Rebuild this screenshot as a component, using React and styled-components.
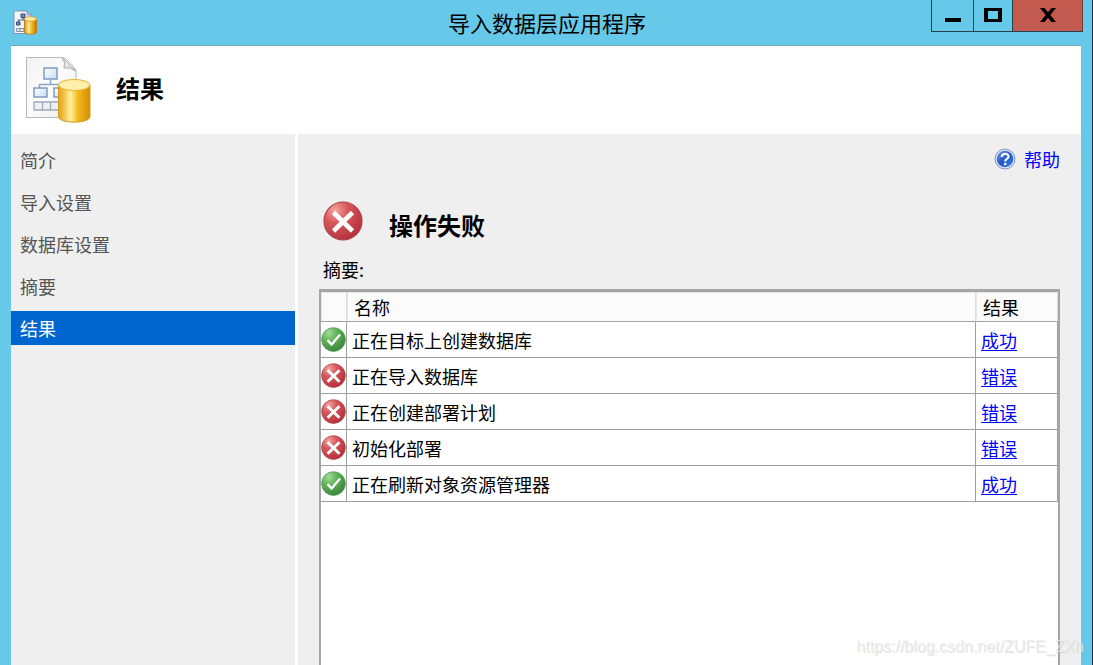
import React, { useState } from "react";
import styled, { createGlobalStyle } from "styled-components";

const GlobalStyle = createGlobalStyle`
* {
  box-sizing: border-box;
}
body {
  margin: 0;
  background: #66c9e9;
  color: #000;
  font-family: "Noto Sans CJK SC", sans-serif;
  font-size: 18px;
  line-height: 24px;
}
`
const StyledWindow = styled.div`
position: relative;
display: flex;
flex-direction: column;
min-height: 100vh;
padding: 0 11px;
background: #66c9e9;
border-right: 1px solid #2b2f3a;
overflow: hidden;
`
const StyledTitleBar = styled.div`
display: grid;
grid-template-columns: 1fr auto 1fr;
align-items: start;
height: 46px;
margin-right: -2px;
`
const StyledAppIcon = styled.div`
padding: 10px 0 0 2px;
line-height: 0;
`
const StyledTitle = styled.h1`
margin: 0;
padding-top: 7px;
font-size: 22px;
font-weight: 400;
line-height: 30px;
`
const StyledControls = styled.div`
display: flex;
justify-content: flex-end;
`
const StyledControl = styled.button`
display: flex;
align-items: center;
justify-content: center;
width: ${(props) => props.$width}px;
height: 32px;
padding: 0 0 2px;
border: 1px solid #27404a;
border-top: none;
border-right: ${(props) => (props.$close ? "1px solid #6d3a3a" : "none")};
background: ${(props) => (props.$close ? "#c25a50" : "#66c9e9")};
`
const StyledHeader = styled.div`
display: flex;
align-items: center;
gap: 24px;
height: 88px;
padding-left: 13px;
background: #fff;
box-shadow: 0 -1px #6fa9c0;
`
const StyledHeading = styled.h2`
margin: 0;
padding-bottom: 4px;
font-size: 24px;
font-weight: 700;
line-height: 32px;
`
const StyledBody = styled.div`
display: flex;
flex: 1;
gap: 3px;
background: #fff;
`
const StyledNav = styled.nav`
display: flex;
flex-direction: column;
gap: 8px;
width: 284px;
padding-top: 9px;
background: #efefef;
`
const StyledNavItem = styled.button`
height: 34px;
padding: 0 9px;
border: none;
background: ${(props) => (props.$active ? "#0066cf" : "transparent")};
color: ${(props) => (props.$active ? "#fff" : "#555")};
font: inherit;
text-align: left;
`
const StyledMain = styled.main`
display: flex;
flex-direction: column;
flex: 1;
padding: 13px 21px 0;
background: #efefef;
`
const StyledHelp = styled.a`
display: flex;
align-items: center;
align-self: flex-end;
gap: 8px;
color: #0000ff;
text-decoration: none;
`
const StyledStatus = styled.div`
display: flex;
align-items: center;
gap: 26px;
padding: 30px 0 16px 4px;
`
const StyledStatusText = styled.h2`
margin: 0;
padding-top: 8px;
font-size: 24px;
font-weight: 700;
line-height: 32px;
`
const StyledLabel = styled.div`
padding: 0 0 8px 4px;
`
const StyledGrid = styled.div`
flex: 1;
border: 2px solid #a6a6aa;
border-top-width: 3px;
border-bottom: none;
background: #fff;
`
const StyledTable = styled.table`
width: 100%;
border-collapse: separate;
border-spacing: 0;
table-layout: fixed;
`
const StyledTh = styled.th`
width: ${(props) => props.$width || "auto"};
height: 30px;
padding: 0 7px;
border-right: 1px solid #dcdcdc;
border-bottom: 1px solid #a0a0a0;
background: #fbfbfb;
box-shadow: inset 1px 1px #e6e6e6;
font-weight: 400;
text-align: left;
`
const StyledTd = styled.td`
height: 36px;
padding: ${(props) => (props.$icon ? "0" : "0 6px 0 5px")};
border-right: 1px solid #a0a0a0;
border-bottom: 1px solid #a0a0a0;
line-height: ${(props) => (props.$icon ? "0" : "24px")};
`
const StyledLink = styled.a`
color: #0000ff;
text-decoration: underline;
text-underline-offset: 2px;
`
const StyledWatermark = styled.div`
position: absolute;
right: 8px;
bottom: 8px;
color: rgba(235, 235, 235, 0.75);
font-family: "Liberation Sans", sans-serif;
font-size: 16px;
line-height: 20px;
text-shadow: 1px 1px rgba(150, 150, 150, 0.25);
pointer-events: none;
`

const steps = ["简介", "导入设置", "数据库设置", "摘要", "结果"];

const results = [
  { name: "正在目标上创建数据库", ok: true },
  { name: "正在导入数据库", ok: false },
  { name: "正在创建部署计划", ok: false },
  { name: "初始化部署", ok: false },
  { name: "正在刷新对象资源管理器", ok: true },
];

function AppIcon() {
  return (
    <svg width="25" height="25" viewBox="0 0 25 25" aria-hidden="true">
      <defs>
        <linearGradient id="app-gold" x1="0" x2="1">
          <stop offset="0" stopColor="#d79a1c" />
          <stop offset="0.35" stopColor="#ffe88c" />
          <stop offset="0.65" stopColor="#f0b020" />
          <stop offset="1" stopColor="#b87400" />
        </linearGradient>
      </defs>
      <path d="M1 1H14L18 5V23.500H1Z" fill="#f2f5fa" stroke="#8794ab" />
      <path d="M14 1V5H18Z" fill="#cdd5e2" stroke="#8794ab" />
      <path d="M10 7V10M5.500 13V10H11" fill="none" stroke="#4b628e" strokeWidth="1.200" />
      <path d="M8 4H12V7.500H8ZM3.500 12H7V15H3.500Z" fill="#6f8fc4" stroke="#34487a" />
      <path d="M3.500 18.500H11V21.500H3.500ZM7 18.500V21.500" fill="#e3e9f3" stroke="#8392ac" />
      <path d="M11.500 9V22C11.500 25 23.500 25 23.500 22V9Z" fill="url(#app-gold)" stroke="#bd801a" />
      <ellipse cx="17.500" cy="9" rx="6" ry="2.300" fill="#fff0a8" stroke="#d8a132" />
    </svg>
  )
}

function DatabaseIcon() {
  return (
    <svg width="68" height="68" viewBox="0 0 68 68" aria-hidden="true">
      <defs>
        <linearGradient id="db-gold" x1="0" x2="1">
          <stop offset="0" stopColor="#e2a21c" />
          <stop offset="0.15" stopColor="#f0bd3c" />
          <stop offset="0.38" stopColor="#fff0a0" />
          <stop offset="0.62" stopColor="#f3b71f" />
          <stop offset="1" stopColor="#d48c00" />
        </linearGradient>
        <linearGradient id="db-page" x1="0" y1="0" x2="1" y2="1">
          <stop offset="0" stopColor="#f1f1f1" />
          <stop offset="0.5" stopColor="#fdfdfd" />
          <stop offset="1" stopColor="#e6e6e6" />
        </linearGradient>
        <linearGradient id="db-box" x1="0" y1="0" x2="1" y2="1">
          <stop offset="0" stopColor="#fff" />
          <stop offset="1" stopColor="#c9dcf3" />
        </linearGradient>
      </defs>
      <path d="M2.500 1.500H38Q43 2 52 14V61.500H2.500Z" fill="url(#db-page)" stroke="#b9b9b9" />
      <path d="M38 1.500Q42 6 40 12Q46 10.500 52 15Z" fill="#e6e6e6" stroke="#aaa" />
      <path d="M26.500 24V28M15.500 32V28.500H38V32" fill="none" stroke="#8ba6c4" strokeWidth="1.500" />
      <g fill="url(#db-box)" stroke="#7795bb" strokeWidth="1.400">
        <rect x="20" y="12" width="13" height="11" />
        <rect x="10" y="32" width="13" height="9" />
        <rect x="30" y="32" width="13" height="9" />
      </g>
      <path d="M10 46H40V54H10ZM18.500 46V54M26.500 46V54" fill="#f0f0f0" stroke="#9aa8ba" strokeWidth="1.300" />
      <path d="M34.500 29V60.500C34.500 68 66 68 66 60.500V29Z" fill="url(#db-gold)" stroke="#d39a20" />
      <ellipse cx="50.200" cy="29" rx="15.700" ry="5.500" fill="#fff0ae" stroke="#e8b32e" />
    </svg>
  )
}

function StatusIcon({ ok, size, id }) {
  return (
    <svg width={size} height={size} viewBox="0 0 40 40" role="img" aria-label={ok ? "成功" : "错误"}>
      <defs>
        <radialGradient id={id} cx="0.3" cy="0.22" r="0.85">
          <stop offset="0" stopColor={ok ? "#a3dc98" : "#f4a59c"} />
          <stop offset="0.4" stopColor={ok ? "#62b35b" : "#d8555a"} />
          <stop offset="1" stopColor={ok ? "#37853a" : "#b3303b"} />
        </radialGradient>
      </defs>
      <circle cx="20" cy="20" r="19" fill={`url(#${id})`} stroke={ok ? "#4f9a50" : "#ad434b"} strokeWidth="1.200" />
      {ok ? (
        <path d="M10.500 21L17 28L30.500 12" fill="none" stroke="#fff" strokeWidth="3.800" />
      ) : (
        <path d="M10.500 11.500L29.500 30M29.500 11.500L10.500 30" fill="none" stroke="#fff" strokeWidth="4.600" />
      )}
    </svg>
  )
}

function HelpIcon() {
  return (
    <svg width="22" height="22" viewBox="0 0 22 22" aria-hidden="true">
      <defs>
        <linearGradient id="help-blue" x1="0" y1="0" x2="1" y2="1">
          <stop offset="0" stopColor="#6f9fe8" />
          <stop offset="0.5" stopColor="#2258c8" />
          <stop offset="1" stopColor="#3d85ec" />
        </linearGradient>
      </defs>
      <circle cx="11" cy="11" r="10" fill="#dce7f6" stroke="#7f98c0" />
      <circle cx="11" cy="11" r="8.300" fill="url(#help-blue)" />
      <path d="M7.800 9C7.800 4.800 14.500 4.800 14.500 8.600C14.500 11 11.200 10.800 11.200 13.400" fill="none" stroke="#fff" strokeWidth="2.200" />
      <circle cx="11.200" cy="16" r="1.300" fill="#fff" />
    </svg>
  )
}

function TitleBar() {
  return (
    <StyledTitleBar>
      <StyledAppIcon>
        <AppIcon />
      </StyledAppIcon>
      <StyledTitle>导入数据层应用程序</StyledTitle>
      <StyledControls>
        <StyledControl $width={42} aria-label="最小化">
          <svg width="16" height="14" viewBox="0 0 16 14">
            <path d="M0 10H16V14H0Z" />
          </svg>
        </StyledControl>
        <StyledControl $width={39} aria-label="最大化">
          <svg width="18" height="14" viewBox="0 0 18 14">
            <path d="M0 0H18V14H0ZM4 3V11H14V3Z" fillRule="evenodd" />
          </svg>
        </StyledControl>
        <StyledControl $width={71} $close aria-label="关闭">
          <svg width="16" height="14" viewBox="0 0 16 14">
            <path d="M0 0H4.500L8 4.300L11.500 0H16L10.300 7L16 14H11.500L8 9.700L4.500 14H0L5.700 7Z" />
          </svg>
        </StyledControl>
      </StyledControls>
    </StyledTitleBar>
  )
}

function ResultTable() {
  return (
    <StyledTable>
      <thead>
        <tr>
          <StyledTh $width="26px" aria-label="状态"></StyledTh>
          <StyledTh>名称</StyledTh>
          <StyledTh $width="82px">结果</StyledTh>
        </tr>
      </thead>
      <tbody>
        {results.map((row, i) => (
          <tr key={i}>
            <StyledTd $icon>
              <StatusIcon ok={row.ok} size={25} id={`row-${i}`} />
            </StyledTd>
            <StyledTd>{row.name}</StyledTd>
            <StyledTd>
              <StyledLink href="#">{row.ok ? "成功" : "错误"}</StyledLink>
            </StyledTd>
          </tr>
        ))}
      </tbody>
    </StyledTable>
  )
}

function App() {
  const [step, setStep] = useState(4);

  return (
    <StyledWindow>
      <GlobalStyle />
      <TitleBar />
      <StyledHeader>
        <DatabaseIcon />
        <StyledHeading>结果</StyledHeading>
      </StyledHeader>
      <StyledBody>
        <StyledNav>
          {steps.map((name, i) => (
            <StyledNavItem key={name} $active={i === step} onClick={() => setStep(i)}>
              {name}
            </StyledNavItem>
          ))}
        </StyledNav>
        <StyledMain>
          <StyledHelp href="#">
            <HelpIcon />
            帮助
          </StyledHelp>
          <StyledStatus>
            <StatusIcon ok={false} size={40} id="status" />
            <StyledStatusText>操作失败</StyledStatusText>
          </StyledStatus>
          <StyledLabel>摘要:</StyledLabel>
          <StyledGrid>
            <ResultTable />
          </StyledGrid>
        </StyledMain>
      </StyledBody>
      <StyledWatermark>https://blog.csdn.net/ZUFE_ZXh</StyledWatermark>
    </StyledWindow>
  )
}

export default App;
